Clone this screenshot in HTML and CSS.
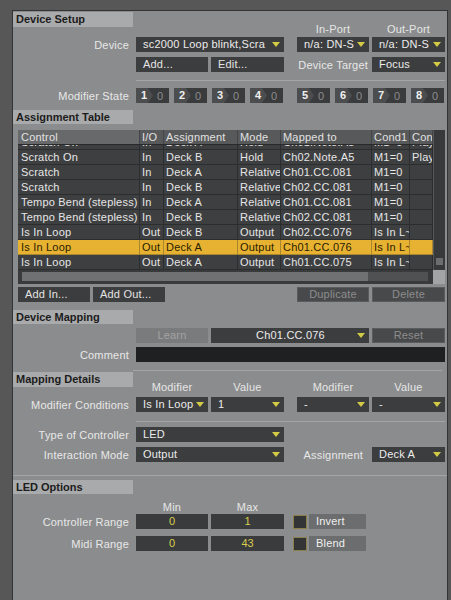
FILE: index.html
```html
<!DOCTYPE html>
<html>
<head>
<meta charset="utf-8">
<link rel="stylesheet" href="styles.css">
</head>
<body>
<div class="frame">
<div class="panel">

  <div class="hrow h23">
    <div class="sec-head">Device Setup</div>
    <div class="collbls ml164">
      <span class="cl w72">In-Port</span>
      <span class="cl w73 g3">Out-Port</span>
    </div>
  </div>

  <div class="row mt2">
    <div class="lbl">Device</div>
    <div class="dd w148"><span class="dd-t">sc2000 Loop blinkt,Scra</span><svg class="arr" width="8" height="5" viewBox="0 0 8 5"><path d="M0 0H8L4 5Z"/></svg></div>
    <div class="dd w72 g13"><span class="dd-t">n/a: DN-S</span><svg class="arr" width="8" height="5" viewBox="0 0 8 5"><path d="M0 0H8L4 5Z"/></svg></div>
    <div class="dd w73 g3"><span class="dd-t">n/a: DN-S</span><svg class="arr" width="8" height="5" viewBox="0 0 8 5"><path d="M0 0H8L4 5Z"/></svg></div>
  </div>

  <div class="row mt5">
    <div class="lbl"></div>
    <div class="btn w72">Add...</div>
    <div class="btn w73 g3">Edit...</div>
    <div class="lbl2 w72 g13">Device Target</div>
    <div class="dd w73 g3"><span class="dd-t">Focus</span><svg class="arr" width="8" height="5" viewBox="0 0 8 5"><path d="M0 0H8L4 5Z"/></svg></div>
  </div>

  <div class="divider mt8 ml123"></div>

  <div class="row mt7">
    <div class="lbl">Modifier State</div>
    <div class="ms"><span class="ms-n">1</span><span class="ms-v">0</span></div>
    <div class="ms g5"><span class="ms-n">2</span><span class="ms-v">0</span></div>
    <div class="ms g5"><span class="ms-n">3</span><span class="ms-v">0</span></div>
    <div class="ms g5"><span class="ms-n">4</span><span class="ms-v">0</span></div>
    <div class="ms g14"><span class="ms-n">5</span><span class="ms-v">0</span></div>
    <div class="ms g5"><span class="ms-n">6</span><span class="ms-v">0</span></div>
    <div class="ms g5"><span class="ms-n">7</span><span class="ms-v">0</span></div>
    <div class="ms g5"><span class="ms-n">8</span><span class="ms-v">0</span></div>
  </div>

  <div class="sec-head mt7">Assignment Table</div>

  <div class="table mt6">
    <div class="tmain">
      <div class="trow thead">
        <div class="c sorted">Control</div><div class="c">I/O</div><div class="c">Assignment</div><div class="c">Mode</div><div class="c">Mapped to</div><div class="c">Cond1</div><div class="c">Con</div>
      </div>
      <div class="tbody">
        <div class="trow first"><div class="c">Scratch On</div><div class="c">In</div><div class="c">Deck A</div><div class="c">Hold</div><div class="c">Ch01.Note.A5</div><div class="c">M1=0</div><div class="c">Play</div></div>
        <div class="trow"><div class="c">Scratch On</div><div class="c">In</div><div class="c">Deck B</div><div class="c">Hold</div><div class="c">Ch02.Note.A5</div><div class="c">M1=0</div><div class="c">Play</div></div>
        <div class="trow"><div class="c">Scratch</div><div class="c">In</div><div class="c">Deck A</div><div class="c">Relative</div><div class="c">Ch01.CC.081</div><div class="c">M1=0</div><div class="c"></div></div>
        <div class="trow"><div class="c">Scratch</div><div class="c">In</div><div class="c">Deck B</div><div class="c">Relative</div><div class="c">Ch02.CC.081</div><div class="c">M1=0</div><div class="c"></div></div>
        <div class="trow"><div class="c">Tempo Bend (stepless)</div><div class="c">In</div><div class="c">Deck A</div><div class="c">Relative</div><div class="c">Ch01.CC.081</div><div class="c">M1=0</div><div class="c"></div></div>
        <div class="trow"><div class="c">Tempo Bend (stepless)</div><div class="c">In</div><div class="c">Deck B</div><div class="c">Relative</div><div class="c">Ch02.CC.081</div><div class="c">M1=0</div><div class="c"></div></div>
        <div class="trow"><div class="c">Is In Loop</div><div class="c">Out</div><div class="c">Deck B</div><div class="c">Output</div><div class="c">Ch02.CC.076</div><div class="c">Is In L~</div><div class="c"></div></div>
        <div class="trow sel"><div class="c">Is In Loop</div><div class="c">Out</div><div class="c">Deck A</div><div class="c">Output</div><div class="c">Ch01.CC.076</div><div class="c">Is In L~</div><div class="c"></div></div>
        <div class="trow"><div class="c">Is In Loop</div><div class="c">Out</div><div class="c">Deck A</div><div class="c">Output</div><div class="c">Ch01.CC.075</div><div class="c">Is In L~</div><div class="c"></div></div>
      </div>
      <div class="hscroll"><div class="htrack"><div class="hthumb"></div></div></div>
    </div>
    <div class="vscroll">
      <div class="vtrack"><div class="vthumb"></div></div>
      <div class="corner"></div>
    </div>
  </div>

  <div class="row mt3 ml5">
    <div class="btn w72">Add In...</div>
    <div class="btn w72 g3">Add Out...</div>
    <div class="btn dis w72 ml132">Duplicate</div>
    <div class="btn dis w73 g3">Delete</div>
  </div>

  <div class="sec-head mt8">Device Mapping</div>

  <div class="row mt4">
    <div class="lbl"></div>
    <div class="btn learn w72">Learn</div>
    <div class="dd ctr w158 g3"><span class="dd-t">Ch01.CC.076</span><svg class="arr" width="8" height="5" viewBox="0 0 8 5"><path d="M0 0H8L4 5Z"/></svg></div>
    <div class="btn dis w73 g3">Reset</div>
  </div>

  <div class="row mt4">
    <div class="lbl">Comment</div>
    <div class="field w309"></div>
  </div>

  <div class="divider mt8 ml120 w312"></div>

  <div class="hrow h21 mt1">
    <div class="sec-head">Mapping Details</div>
    <div class="collbls g3">
      <span class="cl w72">Modifier</span>
      <span class="cl w73 g3">Value</span>
      <span class="cl w72 g13">Modifier</span>
      <span class="cl w73 g3">Value</span>
    </div>
  </div>

  <div class="row mt4">
    <div class="lbl">Modifier Conditions</div>
    <div class="dd w72"><span class="dd-t">Is In Loop</span><svg class="arr" width="8" height="5" viewBox="0 0 8 5"><path d="M0 0H8L4 5Z"/></svg></div>
    <div class="dd w73 g3"><span class="dd-t">1</span><svg class="arr" width="8" height="5" viewBox="0 0 8 5"><path d="M0 0H8L4 5Z"/></svg></div>
    <div class="dd w72 g13"><span class="dd-t">-</span><svg class="arr" width="8" height="5" viewBox="0 0 8 5"><path d="M0 0H8L4 5Z"/></svg></div>
    <div class="dd w73 g3"><span class="dd-t">-</span><svg class="arr" width="8" height="5" viewBox="0 0 8 5"><path d="M0 0H8L4 5Z"/></svg></div>
  </div>

  <div class="divider mt9 ml123"></div>

  <div class="row mt5">
    <div class="lbl">Type of Controller</div>
    <div class="dd w148"><span class="dd-t">LED</span><svg class="arr" width="8" height="5" viewBox="0 0 8 5"><path d="M0 0H8L4 5Z"/></svg></div>
  </div>

  <div class="row mt5">
    <div class="lbl">Interaction Mode</div>
    <div class="dd w148"><span class="dd-t">Output</span><svg class="arr" width="8" height="5" viewBox="0 0 8 5"><path d="M0 0H8L4 5Z"/></svg></div>
    <div class="lbl2 w72 g13 pr5">Assignment</div>
    <div class="dd w73 g3"><span class="dd-t">Deck A</span><svg class="arr" width="8" height="5" viewBox="0 0 8 5"><path d="M0 0H8L4 5Z"/></svg></div>
  </div>

  <div class="divider mt13 full"></div>

  <div class="sec-head mt4">LED Options</div>

  <div class="collbls mt7 ml123 h12">
    <span class="cl w72">Min</span>
    <span class="cl w73 g3">Max</span>
  </div>

  <div class="row mt1">
    <div class="lbl">Controller Range</div>
    <div class="num w72">0</div>
    <div class="num w73 g3">1</div>
    <div class="chk ml9"></div>
    <div class="chklbl">Invert</div>
  </div>

  <div class="row mt7">
    <div class="lbl">Midi Range</div>
    <div class="num w72">0</div>
    <div class="num w73 g3">43</div>
    <div class="chk ml9"></div>
    <div class="chklbl">Blend</div>
  </div>

</div>
</div>
</body>
</html>
```

FILE: styles.css
```css
html, body {
  margin: 0;
  padding: 0;
}
body {
  background: #575757;
  font-family: "Liberation Sans", Arial, sans-serif;
  font-size: 11px;
  color: #e8e8e8;
  width: 451px;
  height: 600px;
  overflow: hidden;
}
.frame {
  padding: 10px 3px 0 12px;
}
.panel {
  width: 434px;
  height: 600px;
  background: #8b8c8d;
  border-left: 1px solid #343434;
  border-top: 1px solid #343434;
  border-right: 1px solid #343434;
  display: flex;
  flex-direction: column;
  align-items: flex-start;
}
.sec-head {
  width: 120px;
  height: 14px;
  line-height: 14px;
  box-sizing: border-box;
  padding-left: 3px;
  background: #a9aaab;
  color: #1c1c1c;
  font-weight: bold;
  flex: none;
}
.hrow {
  display: flex;
  align-items: flex-end;
  margin-top: 1px;
}
.hrow .sec-head {
  align-self: flex-start;
  height: 15px;
}
.h23 { height: 23px; }
.h21 { height: 21px; }
.h12 { height: 12px; }
.collbls {
  display: flex;
}
.cl {
  display: block;
  text-align: center;
  line-height: 12px;
  color: #e6e6e6;
  letter-spacing: 0.2px;
}
.row {
  display: flex;
  align-items: center;
  height: 15px;
}
.lbl {
  width: 123px;
  box-sizing: border-box;
  padding-right: 7px;
  text-align: right;
  white-space: nowrap;
  color: #e8e8e8;
  letter-spacing: 0.2px;
  flex: none;
}
.lbl2 {
  text-align: right;
  white-space: nowrap;
  color: #e8e8e8;
  letter-spacing: 0.2px;
  box-sizing: border-box;
  padding-right: 1px;
}
.pr5 { padding-right: 6px; }

.w72 { width: 72px; }
.w73 { width: 73px; }
.w148 { width: 148px; }
.w158 { width: 158px; }
.w309 { width: 309px; }
.w312 { width: 312px; }
.g3 { margin-left: 3px; }
.g5 { margin-left: 5px; }
.g13 { margin-left: 13px; }
.g14 { margin-left: 14px; }
.ml5 { margin-left: 5px; }
.ml9 { margin-left: 9px; }
.ml120 { margin-left: 120px; }
.ml123 { margin-left: 123px; }
.ml132 { margin-left: 132px; }
.ml164 { margin-left: 164px; }
.mt1 { margin-top: 1px; }
.mt2 { margin-top: 2px; }
.mt3 { margin-top: 3px; }
.mt4 { margin-top: 4px; }
.mt5 { margin-top: 5px; }
.mt6 { margin-top: 6px; }
.mt7 { margin-top: 7px; }
.mt8 { margin-top: 8px; }
.mt9 { margin-top: 9px; }
.mt13 { margin-top: 13px; }

.dd, .btn, .num, .field {
  height: 15px;
  line-height: 15px;
  box-sizing: border-box;
  flex: none;
}
.dd {
  background: #3c3d3e;
  display: flex;
  align-items: center;
  padding: 0 4px 0 7px;
  color: #ececec;
  letter-spacing: 0.2px;
}
.dd-t {
  flex: 1;
  overflow: hidden;
  white-space: nowrap;
  margin-right: 2px;
}
.dd.ctr .dd-t {
  text-align: center;
  padding-left: 8px;
}
.arr {
  flex: none;
  fill: #d3ca45;
}
.btn {
  background: #3c3d3e;
  padding-left: 7px;
  color: #e4e4e4;
  white-space: nowrap;
  letter-spacing: 0.2px;
}
.btn.dis {
  background: #48494a;
  color: #8c8d8e;
  text-align: center;
  padding-left: 0;
  border: 1px solid #5a5b5c;
  line-height: 13px;
}
.btn.learn {
  background: #7a7b7c;
  color: #a2a3a4;
  text-align: center;
  padding-left: 0;
}
.field {
  background: #1f2021;
}
.divider {
  height: 1px;
  width: 309px;
  background: #a4a5a6;
  flex: none;
}
.divider.full {
  width: 434px;
  margin-left: 0;
}

.ms {
  width: 33px;
  height: 15px;
  background: #3a3b3c;
  display: flex;
  align-items: center;
  flex: none;
}
.ms-n {
  width: 17px;
  height: 15px;
  line-height: 15px;
  box-sizing: border-box;
  padding-left: 5px;
  background: #4c4d4e;
  color: #f0f0f0;
  font-weight: bold;
  clip-path: polygon(0 0, 70% 0, 100% 50%, 70% 100%, 0 100%);
}
.ms-v {
  padding-left: 4px;
  color: #8b8c8d;
}

.table {
  display: flex;
  margin-left: 5px;
  width: 427px;
  height: 154px;
  background: #3d3e3f;
  flex: none;
}
.tmain {
  width: 415px;
  display: flex;
  flex-direction: column;
}
.trow {
  display: grid;
  grid-template-columns: 122px 24px 74px 43px 91px 38px 23px;
  height: 15px;
  box-sizing: border-box;
  border-bottom: 1px solid #2c2d2e;
  background: #3e3f40;
  flex: none;
}
.c {
  padding-left: 2px;
  line-height: 14px;
  white-space: nowrap;
  overflow: hidden;
  border-right: 1px solid #2c2d2e;
  color: #e6e6e6;
  letter-spacing: 0.2px;
}
.trow .c:first-child {
  padding-left: 3px;
}
.thead {
  background: #58595a;
  border-bottom: 1px solid #2a2a2a;
}
.thead .c {
  color: #e2e2e2;
  border-right: 1px solid #444546;
}
.thead .c.sorted {
  background: #68696a;
}
.tbody {
  height: 125px;
  overflow: hidden;
  display: flex;
  flex-direction: column;
}
.trow.first {
  margin-top: -10px;
}
.trow.sel {
  background: #e7b231;
  border-bottom-color: #a8862e;
}
.trow.sel .c {
  color: #2a1c00;
  border-right-color: #a8862e;
}
.hscroll {
  height: 14px;
  background: #393a3b;
  padding: 2px 4px 3px 4px;
  box-sizing: border-box;
}
.htrack {
  height: 9px;
  background: #505152;
  width: 406px;
}
.hthumb {
  width: 346px;
  height: 9px;
  background: #707172;
}
.vscroll {
  width: 12px;
  display: flex;
  flex-direction: column;
}
.vtrack {
  flex: 1;
  background: #38393a;
  border-left: 1px solid #565758;
  position: relative;
}
.vthumb {
  position: absolute;
  left: 2px;
  right: 2px;
  top: 128px;
  height: 7px;
  background: #6c6d6e;
}
.corner {
  height: 14px;
  background: #a3a4a5;
}

.num {
  background: #3a3b3c;
  color: #d9cc50;
  text-align: center;
}
.chk {
  width: 14px;
  height: 14px;
  box-sizing: border-box;
  background: #333435;
  border: 1px solid #8c7f48;
  flex: none;
}
.chklbl {
  width: 57px;
  height: 15px;
  line-height: 15px;
  margin-left: 2px;
  box-sizing: border-box;
  padding-left: 7px;
  background: #6c6d6e;
  color: #f0f0f0;
  letter-spacing: 0.2px;
}
```
